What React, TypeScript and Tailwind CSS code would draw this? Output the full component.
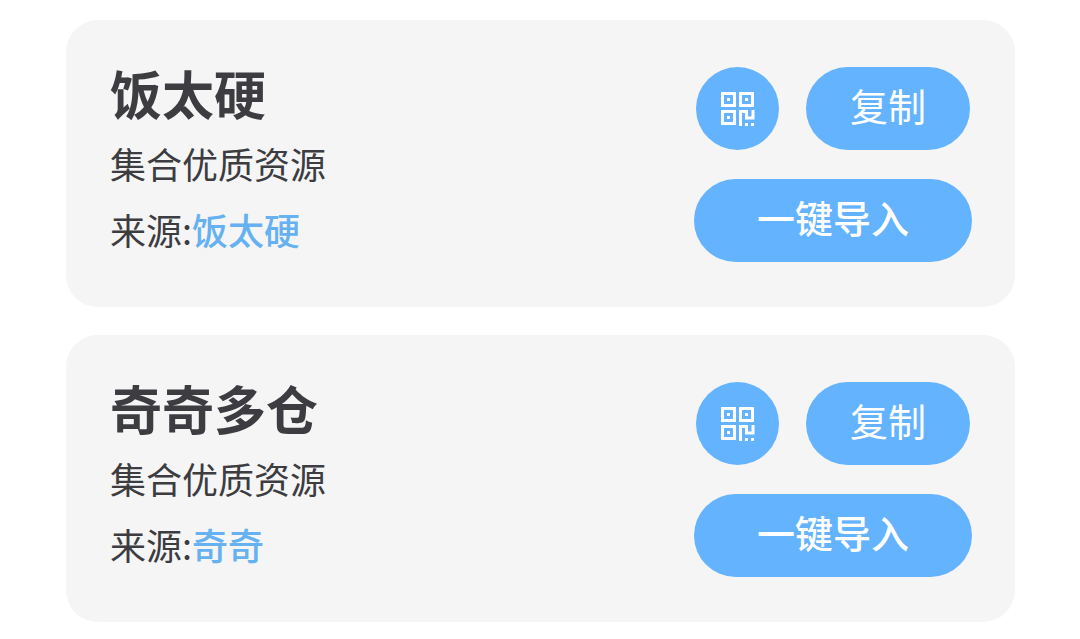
interface Source {
  name: string;
  description: string;
  author: string;
}

const sources: Source[] = [
  { name: "饭太硬", description: "集合优质资源", author: "饭太硬" },
  { name: "奇奇多仓", description: "集合优质资源", author: "奇奇" },
];

const QrIcon = () => (
  <svg viewBox="0 0 34 34" className="size-[34px]" fill="none" stroke="currentColor" strokeWidth="3" aria-hidden="true">
    {/* Finder squares */}
    <rect x="1.5" y="1.5" width="12" height="12" />
    <rect x="19.5" y="1.5" width="12" height="12" />
    <rect x="1.5" y="19.5" width="12" height="12" />
    <path d="M6 7.5h3M24 7.5h3M6 25.5h3" />
    {/* Data modules */}
    <path d="M19.5 34V19.5H25.5V26H32V18" />
    <path d="M24 32.5h3M30 32.5h3" />
  </svg>
);

const SourceCard = ({ name, description, author }: Source) => {
  return (
    <section className="flex items-end justify-between rounded-[32px] bg-[#f5f5f5] pt-9 pr-[43px] pb-[45px] pl-11 text-[#3c3c41]">
      {/* Details */}
      <div>
        <h2 className="text-[52px] leading-[74px] font-bold">{name}</h2>
        <p className="text-[36px] leading-[66px]">{description}</p>
        <p className="text-[36px] leading-[66px]">
          来源:
          <a href="#" className="font-medium text-[#66b1f1]">{author}</a>
        </p>
      </div>

      {/* Actions */}
      <div className="flex w-[278px] flex-col items-center gap-[29px] text-[38px] leading-[56px] text-white">
        <div className="flex gap-[27px]">
          <button aria-label="二维码" className="flex size-[83px] items-center justify-center rounded-full bg-[#64b3ff]">
            <QrIcon />
          </button>
          <button className="h-[83px] w-[164px] rounded-full bg-[#64b3ff] pb-2">复制</button>
        </div>
        <button className="h-[83px] w-full rounded-full bg-[#64b3ff] pb-2 font-medium">一键导入</button>
      </div>
    </section>
  );
};

const App = () => {
  return (
    <main
      lang="zh-CN"
      className="flex flex-col gap-7 bg-white pt-5 pr-[65px] pb-4 pl-[66px] font-['Noto_Sans_CJK_SC',sans-serif]"
    >
      {sources.map((source) => (
        <SourceCard key={source.name} {...source} />
      ))}
    </main>
  );
};

export default App;
